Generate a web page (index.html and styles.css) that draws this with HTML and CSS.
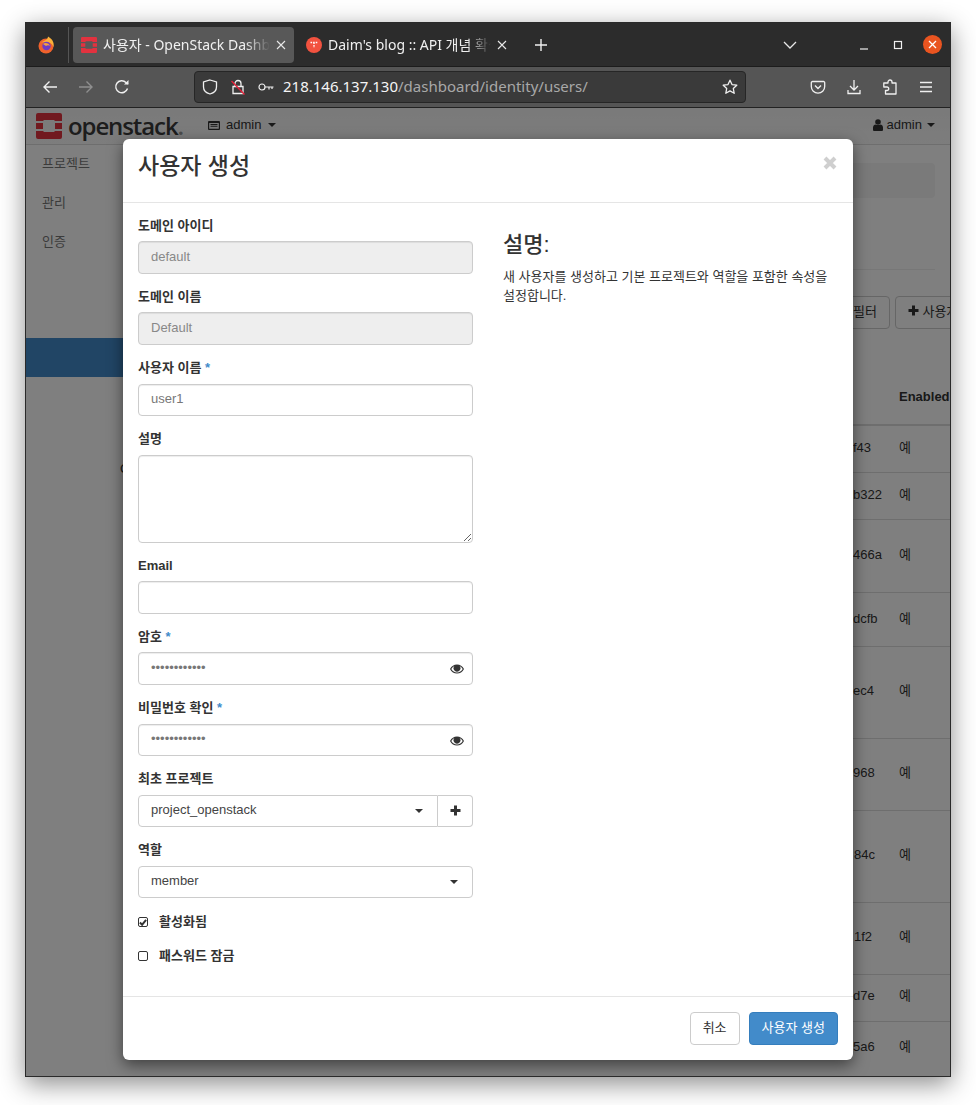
FILE: index.html
```html
<!DOCTYPE html>
<html lang="en">
<head>
    <meta charset="UTF-8">
    <meta name="viewport" content="width=device-width, initial-scale=1.0">
    <title>사용자 - OpenStack Dashboard</title>
    <link rel="stylesheet" href="styles.css">
</head>
<body>
    <div class="window">
        <!-- Browser tabs -->
        <div class="tabbar">
            <div class="fx-slot">
                <svg width="18" height="18" viewBox="0 0 18 18">
                    <circle cx="9" cy="10" r="7.5" fill="#f0622c"/>
                    <path d="M3 5 C4 7 5 6 7 5 C9 4 11 3 11 0.5 C15 3 17.5 6 16.5 11 C15 7 12 6 9 6 C6 6 4 7 3 5Z" fill="#fbb13a"/>
                    <circle cx="9.5" cy="10" r="4.2" fill="#6f3bc4"/>
                    <path d="M6 8 C8 6 12 7 13 10 C12 9 10 9 9 10 C8 9 7 9 6 8Z" fill="#f6a13a"/>
                </svg>
            </div>
            <div class="tab tab-active">
                <svg class="favicon" width="16" height="16" viewBox="0 0 26 26">
                    <path fill="#e2323f" fill-rule="evenodd" d="M2 0H24A2 2 0 0 1 26 2V8H19L18 7H8L7 8H0V2A2 2 0 0 1 2 0ZM0 10H7V16H0ZM19 10H26V16H19ZM0 18H7L8 19H18L19 18H26V24A2 2 0 0 1 24 26H2A2 2 0 0 1 0 24Z"/>
                </svg>
                <span class="tab-title">사용자 - OpenStack Dashboard</span>
                <svg class="tab-close" width="10" height="10" viewBox="0 0 10 10"><path d="M1 1L9 9M9 1L1 9" stroke="#e8e8e8" stroke-width="1.1"/></svg>
            </div>
            <div class="tab">
                <svg class="favicon" width="16" height="16" viewBox="0 0 16 16">
                    <circle cx="8" cy="8" r="8" fill="#f2523f"/>
                    <path d="M4.5 5.5H11.5M8 5.5V11" stroke="#fff" stroke-width="1.3" stroke-dasharray="1.6 1"/>
                </svg>
                <span class="tab-title">Daim's blog :: API 개념 확실히 잡기</span>
                <svg class="tab-close" width="10" height="10" viewBox="0 0 10 10"><path d="M1 1L9 9M9 1L1 9" stroke="#e8e8e8" stroke-width="1.1"/></svg>
            </div>
            <svg class="new-tab" width="14" height="14" viewBox="0 0 14 14"><path d="M7 1V13M1 7H13" stroke="#f0f0f0" stroke-width="1.4"/></svg>
            <div class="win-controls">
                <svg class="tab-list" width="14" height="8" viewBox="0 0 14 8"><path d="M1 1L7 7L13 1" fill="none" stroke="#e8e8e8" stroke-width="1.3"/></svg>
                <svg class="ctl" width="10" height="10" viewBox="0 0 10 10"><path d="M1 9H9" stroke="#f0f0f0" stroke-width="1.2"/></svg>
                <svg class="ctl ctl-max" width="10" height="10" viewBox="0 0 10 10"><rect x="1.5" y="1.5" width="7" height="7" fill="none" stroke="#f0f0f0" stroke-width="1.2"/></svg>
                <span class="ctl-close"><svg width="9" height="9" viewBox="0 0 9 9"><path d="M1 1L8 8M8 1L1 8" stroke="#fff" stroke-width="1.3"/></svg></span>
            </div>
        </div>

        <!-- Browser toolbar -->
        <div class="toolbar">
            <div class="nav-btns">
                <svg width="16" height="16" viewBox="0 0 16 16"><path d="M15 8H2M7.5 2.5L2 8L7.5 13.5" fill="none" stroke="#f0f0f0" stroke-width="1.4"/></svg>
                <svg width="16" height="16" viewBox="0 0 16 16"><path d="M1 8H14M8.5 2.5L14 8L8.5 13.5" fill="none" stroke="#8f8f8f" stroke-width="1.4"/></svg>
                <svg width="16" height="16" viewBox="0 0 16 16"><path d="M13.5 9.5A6 6 0 1 1 12 3.5L14 5" fill="none" stroke="#f0f0f0" stroke-width="1.4"/><path d="M14.5 1V5.5H10Z" fill="#f0f0f0"/></svg>
            </div>
            <div class="urlbar">
                <svg width="16" height="16" viewBox="0 0 16 16"><path d="M8 1L14.5 3V8C14.5 11.5 11.5 14 8 15C4.5 14 1.5 11.5 1.5 8V3Z" fill="none" stroke="#f0f0f0" stroke-width="1.3"/></svg>
                <svg width="16" height="16" viewBox="0 0 16 16"><path d="M5 7V4.5A3 3 0 0 1 11 4.5V7M3 7.5H13V14.5H3Z" fill="none" stroke="#f0f0f0" stroke-width="1.3"/><path d="M1.5 2L14.5 15.5" stroke="#e5203a" stroke-width="1.4"/></svg>
                <svg width="16" height="10" viewBox="0 0 16 10"><circle cx="4" cy="5" r="3" fill="none" stroke="#f0f0f0" stroke-width="1.2"/><path d="M7 5H15.5M11 5V7.5M14 5V7" fill="none" stroke="#f0f0f0" stroke-width="1.2"/></svg>
                <span class="url"><b>218.146.137.130</b>/dashboard/identity/users/</span>
                <svg width="16" height="16" viewBox="0 0 16 16"><path d="M8 1.2L10 5.6L14.8 6.2L11.3 9.5L12.2 14.3L8 11.9L3.8 14.3L4.7 9.5L1.2 6.2L6 5.6Z" fill="none" stroke="#f0f0f0" stroke-width="1.3" stroke-linejoin="round"/></svg>
            </div>
            <div class="tool-btns">
                <svg width="16" height="16" viewBox="0 0 16 16"><path d="M2.5 2.5H13.5A1.2 1.2 0 0 1 14.7 3.7V7.5A6.7 6.7 0 0 1 1.3 7.5V3.7A1.2 1.2 0 0 1 2.5 2.5Z" fill="none" stroke="#f0f0f0" stroke-width="1.3"/><path d="M5 6.5L8 9.5L11 6.5" fill="none" stroke="#f0f0f0" stroke-width="1.4"/></svg>
                <svg width="16" height="16" viewBox="0 0 16 16"><path d="M8 1V10.5M4 7L8 11L12 7M2 11V14.5H14V11" fill="none" stroke="#f0f0f0" stroke-width="1.3"/></svg>
                <svg width="16" height="16" viewBox="0 0 16 16"><path d="M6 4V3A2 2 0 0 1 10 3V4H14V15H3.5V11.5H5A1.7 1.7 0 0 0 5 8H1.8V4Z" fill="none" stroke="#f0f0f0" stroke-width="1.3" stroke-linejoin="round"/></svg>
                <svg width="16" height="16" viewBox="0 0 16 16"><path d="M2 3.5H14M2 8H14M2 12.5H14" stroke="#f0f0f0" stroke-width="1.3"/></svg>
            </div>
        </div>

        <!-- Dashboard behind the dialog -->
        <div class="page">
            <header class="topnav">
                <svg class="logo-mark" width="26" height="26" viewBox="0 0 26 26">
                    <path fill="#e2323f" fill-rule="evenodd" d="M2 0H24A2 2 0 0 1 26 2V8H19L18 7H8L7 8H0V2A2 2 0 0 1 2 0ZM0 10H7V16H0ZM19 10H26V16H19ZM0 18H7L8 19H18L19 18H26V24A2 2 0 0 1 24 26H2A2 2 0 0 1 0 24Z"/>
                </svg>
                <span class="logo-text">openstack<i>.</i></span>
                <div class="nav-drop">
                    <svg width="12" height="11" viewBox="0 0 12 11"><path fill="#333" fill-rule="evenodd" d="M1 1H11A1 1 0 0 1 12 2V9A1 1 0 0 1 11 10H1A1 1 0 0 1 0 9V2A1 1 0 0 1 1 1ZM1.2 3V8.8H10.8V3ZM2.5 4H9.5V5H2.5ZM2.5 5.8H9.5V6.8H2.5Z"/></svg>
                    <span>admin</span><span class="caret"></span>
                </div>
                <div class="nav-drop nav-user">
                    <svg width="10" height="12" viewBox="0 0 10 12"><circle cx="5" cy="3" r="2.8" fill="#333"/><path fill="#333" d="M0 11V8.5C0 6.5 1.5 5.5 2.5 5.5C3.5 6.3 6.5 6.3 7.5 5.5C8.5 5.5 10 6.5 10 8.5V11Q10 12 9 12H1Q0 12 0 11Z"/></svg>
                    <span>admin</span><span class="caret"></span>
                </div>
            </header>
            <div class="content-wrap">
                <nav class="sidebar">
                    <a class="side-item">프로젝트</a>
                    <a class="side-item">관리</a>
                    <a class="side-item">인증</a>
                    <div class="side-active"></div>
                </nav>
                <main class="main">
                    <div class="breadcrumb"></div>
                    <hr class="rule">
                    <div class="actions">
                        <button class="btn-bg">필터</button>
                        <button class="btn-bg">
                            <svg width="11" height="11" viewBox="0 0 11 11"><path d="M5.5 0.5V10.5M0.5 5.5H10.5" stroke="#333" stroke-width="3"/></svg>
                            사용자 생성
                        </button>
                    </div>
                    <div class="table">
                        <div class="row row-head"><span></span><span></span><span>Enabled</span></div>
                        <div class="row h47"><span class="cut">C</span><span>f43</span><span>예</span></div>
                        <div class="row h47"><span></span><span>b322</span><span>예</span></div>
                        <div class="row h73"><span></span><span>466a</span><span>예</span></div>
                        <div class="row h54"><span></span><span>dcfb</span><span>예</span></div>
                        <div class="row h92 row-up"><span></span><span>ec4</span><span>예</span></div>
                        <div class="row h72 row-up"><span></span><span>968</span><span>예</span></div>
                        <div class="row h92 row-up"><span></span><span class="nudge">84c</span><span>예</span></div>
                        <div class="row h72 row-up"><span></span><span class="nudge">1f2</span><span>예</span></div>
                        <div class="row h47 row-up"><span></span><span>d7e</span><span>예</span></div>
                        <div class="row h54 row-up row-last"><span></span><span>5a6</span><span>예</span></div>
                    </div>
                </main>
            </div>
            <div class="backdrop"></div>

            <!-- Create user dialog -->
            <div class="modal">
                <div class="modal-header">
                    <h3 class="modal-title">사용자 생성</h3>
                    <svg class="modal-x" width="14" height="14" viewBox="0 0 14 14"><path d="M2 2L12 12M12 2L2 12" stroke="#cfcfcf" stroke-width="4"/></svg>
                </div>
                <div class="modal-body">
                    <form class="form-col">
                        <div class="form-group">
                            <label class="form-label">도메인 아이디</label>
                            <input class="form-control" type="text" value="default" readonly>
                        </div>
                        <div class="form-group">
                            <label class="form-label">도메인 이름</label>
                            <input class="form-control" type="text" value="Default" readonly>
                        </div>
                        <div class="form-group">
                            <label class="form-label">사용자 이름 <em>*</em></label>
                            <input class="form-control" type="text" value="user1">
                        </div>
                        <div class="form-group">
                            <label class="form-label">설명</label>
                            <textarea class="form-control form-area"></textarea>
                        </div>
                        <div class="form-group">
                            <label class="form-label">Email</label>
                            <input class="form-control" type="text">
                        </div>
                        <div class="form-group">
                            <label class="form-label">암호 <em>*</em></label>
                            <div class="pw-wrap">
                                <input class="form-control" type="password" value="************">
                                <svg class="eye" width="14" height="10" viewBox="0 0 14 10"><path fill="#333" fill-rule="evenodd" d="M0 5C1.5 2 4 0.5 7 0.5C10 0.5 12.5 2 14 5C12.5 8 10 9.5 7 9.5C4 9.5 1.5 8 0 5ZM1.3 5C2.5 7.2 4.6 8.5 7 8.5C9.4 8.5 11.5 7.2 12.7 5C11.9 3.6 10.9 2.6 9.6 2A3.4 3.4 0 1 1 4.4 2C3.1 2.6 2.1 3.6 1.3 5Z"/></svg>
                            </div>
                        </div>
                        <div class="form-group">
                            <label class="form-label">비밀번호 확인 <em>*</em></label>
                            <div class="pw-wrap">
                                <input class="form-control" type="password" value="************">
                                <svg class="eye" width="14" height="10" viewBox="0 0 14 10"><path fill="#333" fill-rule="evenodd" d="M0 5C1.5 2 4 0.5 7 0.5C10 0.5 12.5 2 14 5C12.5 8 10 9.5 7 9.5C4 9.5 1.5 8 0 5ZM1.3 5C2.5 7.2 4.6 8.5 7 8.5C9.4 8.5 11.5 7.2 12.7 5C11.9 3.6 10.9 2.6 9.6 2A3.4 3.4 0 1 1 4.4 2C3.1 2.6 2.1 3.6 1.3 5Z"/></svg>
                            </div>
                        </div>
                        <div class="form-group">
                            <label class="form-label">최초 프로젝트</label>
                            <div class="select-group">
                                <div class="select-box"><span>project_openstack</span><span class="caret"></span></div>
                                <div class="select-add"><svg width="11" height="11" viewBox="0 0 11 11"><path d="M5.5 0.5V10.5M0.5 5.5H10.5" stroke="#333" stroke-width="3"/></svg></div>
                            </div>
                        </div>
                        <div class="form-group">
                            <label class="form-label">역할</label>
                            <div class="select-box select-full"><span>member</span><span class="caret"></span></div>
                        </div>
                        <div class="check-row">
                            <span class="check-box"><svg width="9" height="9" viewBox="0 0 9 9"><path d="M1 4.5L3.5 7L8 1.5" fill="none" stroke="#333" stroke-width="2.2"/></svg></span>
                            <span class="check-label">활성화됨</span>
                        </div>
                        <div class="check-row check-last">
                            <span class="check-box"></span>
                            <span class="check-label">패스워드 잠금</span>
                        </div>
                    </form>
                    <div class="help-col">
                        <h3 class="help-title">설명:</h3>
                        <p class="help-text">새 사용자를 생성하고 기본 프로젝트와 역할을 포함한 속성을 설정합니다.</p>
                    </div>
                </div>
                <div class="modal-footer">
                    <button class="btn btn-default">취소</button>
                    <button class="btn btn-primary">사용자 생성</button>
                </div>
            </div>
        </div>
    </div>
</body>
</html>
```

FILE: styles.css
```css
* {
    box-sizing: border-box;
}

body {
    margin: 0;
    min-height: 1105px;
    padding: 22px 25px 0 25px;
    background-color: #fff;
    font-family: "Liberation Sans", "Noto Sans CJK KR", sans-serif;
    font-size: 13px;
    line-height: 1.42857;
    color: #333;
}

.window {
    width: 926px;
    height: 1055px;
    border: 1px solid #2a2a2a;
    overflow: hidden;
    display: flex;
    flex-direction: column;
    box-shadow: 0 7px 24px rgba(0, 0, 0, 0.45);
}

/* browser chrome */
.tabbar {
    height: 44px;
    flex: none;
    display: flex;
    align-items: center;
    background-color: #2c2c2c;
    border-bottom: 1px solid #1c1c1c;
    font-family: "Noto Sans", "Noto Sans CJK KR", sans-serif;
    font-size: 14px;
    color: #f0f0f0;
}

.fx-slot {
    width: 43px;
    height: 36px;
    padding-right: 2px;
    display: flex;
    align-items: center;
    justify-content: center;
    border-right: 1px solid #555;
    flex: none;
}

.tab {
    width: 221px;
    height: 36px;
    margin-left: 4px;
    padding: 0 8px;
    display: flex;
    align-items: center;
    gap: 6px;
    border-radius: 4px;
    flex: none;
}

.tab-active {
    background-color: #585858;
}

.tab + .tab {
    width: 217px;
    margin-left: 4px;
}

.tab-title {
    flex: 1;
    white-space: nowrap;
    overflow: hidden;
    -webkit-mask-image: linear-gradient(to right, #000 85%, transparent);
    mask-image: linear-gradient(to right, #000 85%, transparent);
}

.favicon,
.tab-close {
    flex: none;
}

.new-tab {
    margin-left: 19px;
    flex: none;
}

.win-controls {
    margin-left: auto;
    padding-right: 8px;
    display: flex;
    align-items: center;
}

.tab-list {
    margin-right: 62px;
}

.ctl {
    margin-right: 24px;
}

.ctl-max {
    margin-right: 20px;
}

.ctl-close {
    width: 19px;
    height: 19px;
    border-radius: 50%;
    background-color: #e95420;
    display: flex;
    align-items: center;
    justify-content: center;
}

.toolbar {
    height: 41px;
    flex: none;
    display: flex;
    align-items: center;
    background-color: #555;
    border-bottom: 1px solid #222;
    font-family: "Noto Sans", sans-serif;
}

.nav-btns {
    width: 168px;
    padding-left: 16px;
    display: flex;
    gap: 20px;
    flex: none;
}

.urlbar {
    width: 552px;
    height: 32px;
    padding: 0 7px;
    display: flex;
    align-items: center;
    gap: 12px;
    background-color: #3a3a3a;
    border: 1px solid #262626;
    border-radius: 4px;
    flex: none;
}

.url {
    flex: 1;
    margin-left: -3px;
    font-size: 15px;
    color: #a8a8a8;
}

.url b {
    font-weight: 400;
    color: #f5f5f5;
}

.tool-btns {
    padding-left: 64px;
    display: flex;
    gap: 20px;
}

/* dashboard behind the dialog */
.page {
    position: relative;
    flex: 1;
    min-height: 0;
    background-color: #fff;
}

.topnav {
    height: 37px;
    padding: 0 15px 0 10px;
    display: flex;
    align-items: center;
    background: linear-gradient(#f4f4f4, #fafafa);
    border-bottom: 1px solid #ddd;
}

.logo-mark {
    flex: none;
}

.logo-text {
    margin-left: 6px;
    width: 140px;
    font-family: "Open Sans", sans-serif;
    font-size: 24px;
    font-weight: 600;
    letter-spacing: -1.1px;
    color: #3a3a3a;
}

.logo-text i {
    font-style: normal;
    color: #999;
}

.nav-drop {
    display: flex;
    align-items: center;
    gap: 6px;
    margin-bottom: 2px;
}

.nav-user {
    margin-left: auto;
    gap: 4px;
}

.caret {
    display: inline-block;
    width: 0;
    height: 0;
    margin-left: 1px;
    border-top: 4px solid #333;
    border-left: 4px solid transparent;
    border-right: 4px solid transparent;
}

.content-wrap {
    display: flex;
}

.sidebar {
    width: 97px;
    flex: none;
    padding-top: 8.5px;
}

.side-item {
    display: block;
    height: 39px;
    padding-left: 16px;
    line-height: 19px;
    color: #777;
    white-space: nowrap;
}

.side-active {
    height: 39px;
    margin-top: 67.5px;
    background-color: #428bca;
    width: 120px;
}

.main {
    flex: 1;
    min-width: 0;
    padding-top: 18px;
    padding-right: 15px;
}

.breadcrumb {
    height: 35px;
    margin-left: 100px;
    background-color: #f5f5f5;
    border-radius: 4px;
}

.rule {
    margin: 71px 0 0;
    border: 0;
    border-top: 1px solid #eee;
}

.actions {
    margin: 26px -64px 0 0;
    display: flex;
    justify-content: flex-end;
    gap: 5px;
}

.btn-bg {
    height: 33px;
    padding: 6px 12px;
    background-color: #fff;
    border: 1px solid #ccc;
    border-radius: 4px;
    font: inherit;
    color: #333;
}

.table {
    margin-top: 12px;
    margin-right: -15px;
}

.row {
    display: grid;
    grid-template-columns: 1fr 46px 51px;
    align-items: center;
    padding-bottom: 1px;
    border-bottom: 1px solid #ddd;
    white-space: nowrap;
}

.row-up {
    padding-bottom: 3px;
}

.row-head {
    height: 85px;
    padding-bottom: 0;
    border-bottom: 2px solid #ddd;
    align-items: end;
    font-weight: 700;
}

.row-head span:last-child {
    padding-bottom: 17px;
}

.row-last {
    border-bottom: 0;
}

.h47 { height: 47px; }
.h54 { height: 54px; }
.h72 { height: 72px; }
.h73 { height: 73px; }
.h92 { height: 92px; }

.cut {
    margin-left: -3px;
    margin-bottom: -8px;
    align-self: end;
}

.nudge {
    padding-left: 1px;
}

.backdrop {
    position: absolute;
    inset: 0;
    background-color: rgba(0, 0, 0, 0.5);
}

/* dialog */
.modal {
    position: absolute;
    left: 97px;
    top: 31px;
    width: 730px;
    background-color: #fff;
    border-radius: 6px;
    box-shadow: 0 5px 15px rgba(0, 0, 0, 0.5);
}

.modal-header {
    height: 64px;
    padding: 0 15px;
    display: flex;
    align-items: center;
    justify-content: space-between;
    border-bottom: 1px solid #e5e5e5;
}

.modal-title {
    margin: 0 0 8px;
    font-size: 23px;
    font-weight: 500;
    line-height: 1.1;
}

.modal-x {
    margin: 0 1px 16px 0;
}

.modal-body {
    padding: 14.75px 15px 15.25px;
    display: grid;
    grid-template-columns: 335px 1fr;
    column-gap: 30px;
}

.form-group {
    margin-bottom: 15px;
}

.form-label {
    display: block;
    margin-top: -1px;
    margin-bottom: 7.57px;
    line-height: 17px;
    font-weight: 700;
}

.form-label em {
    font-style: normal;
    color: #428bca;
}

.form-control {
    display: block;
    width: 100%;
    height: 32.57px;
    padding: 5px 12px 7px;
    background-color: #fff;
    border: 1px solid #ccc;
    border-radius: 4px;
    font: inherit;
    color: #777;
    box-shadow: inset 0 1px 1px rgba(0, 0, 0, 0.075);
    outline: none;
}

.form-control[readonly] {
    background-color: #eee;
    color: #888;
}

.form-area {
    height: 88px;
    resize: vertical;
}

.pw-wrap {
    position: relative;
}

.eye {
    position: absolute;
    right: 9px;
    top: 12px;
}

.select-group {
    display: flex;
}

.select-box {
    flex: 1;
    height: 32.57px;
    padding: 5px 12px 7px;
    display: flex;
    align-items: center;
    justify-content: space-between;
    border: 1px solid #ccc;
    border-radius: 4px 0 0 4px;
    color: #444;
}

.select-box .caret {
    margin-top: 2px;
    margin-right: 2px;
}

.select-full {
    border-radius: 4px;
}

.select-add {
    width: 35px;
    display: flex;
    align-items: center;
    justify-content: center;
    border: 1px solid #ccc;
    border-left: 0;
    border-radius: 0 4px 4px 0;
}

.check-row {
    height: 34px;
    display: flex;
    gap: 11px;
}

.check-last {
    height: 33px;
}

.check-label {
    line-height: 17px;
    font-weight: 700;
}

.check-box {
    width: 10px;
    height: 10px;
    margin-top: 4px;
    flex: none;
    display: flex;
    align-items: center;
    justify-content: center;
    border: 1px solid #333;
    border-radius: 2px;
}

.help-title {
    margin: 15.25px 0 10px;
    font-size: 22px;
    font-weight: 500;
    line-height: 1.1;
}

.help-text {
    margin: 0;
    line-height: 19px;
    width: 330px;
}

.modal-footer {
    padding: 15px;
    display: flex;
    justify-content: flex-end;
    gap: 9px;
    border-top: 1px solid #e5e5e5;
}

.btn {
    height: 33px;
    padding: 6px 12px;
    border: 1px solid #ccc;
    border-radius: 4px;
    font: inherit;
}

.btn-default {
    background-color: #fff;
    color: #333;
}

.btn-primary {
    background-color: #428bca;
    border-color: #357ebd;
    color: #fff;
}
```
